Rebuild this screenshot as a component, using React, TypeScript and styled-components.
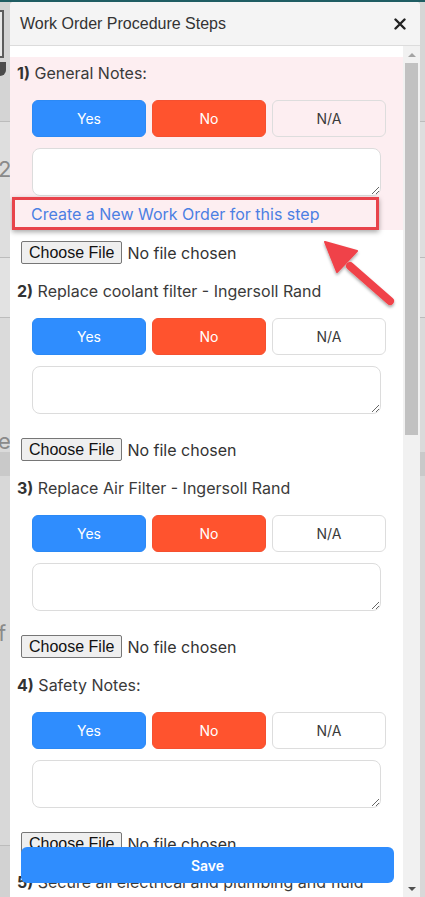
import React from "react";
import styled, { createGlobalStyle } from "styled-components";

const GlobalStyle = createGlobalStyle`
  html, body { margin: 0; padding: 0; }
  body { background: #d3d3d3; overflow: hidden; }
  *, *::before, *::after { box-sizing: border-box; }
`;

const Page = styled.div`
  width: 425px;
  height: 897px;
  display: flex;
  flex-direction: column;
  overflow: hidden;
  background: #d3d3d3;
`;

const TopLine = styled.div`
  height: 2px;
  background: #1f5d63;
  flex: none;
`;

const Main = styled.div`
  flex: 1;
  min-height: 0;
  display: flex;
`;

const SideStrip = styled.div<{ $w: number }>`
  width: ${(p) => p.$w}px;
  flex: none;
  display: flex;
  flex-direction: column;
  overflow: hidden;
  font-family: "Inter", sans-serif;
  font-size: 22px;
  color: #7a7a7a;
`;

const Band = styled.div<{ $h: number; $bg: string; $line?: boolean }>`
  height: ${(p) => p.$h}px;
  flex: none;
  background: ${(p) => p.$bg};
  border-bottom: ${(p) => (p.$line ? "1px solid #bcbcbc" : "none")};
  overflow: hidden;
  line-height: 1;
`;

const EdgeBox = styled.div`
  height: 48px;
  width: 4px;
  margin-top: 8px;
  border: 2px solid #5c5c5c;
  border-left: none;
  background: #e9e9e9;
  flex: none;
`;

const PinIcon = styled.div`
  width: 6px;
  height: 14px;
  margin-top: 4px;
  background: #4a4a4a;
  border-radius: 0 0 6px 0;
  flex: none;
`;

const Glyph = styled.div<{ $top: number }>`
  margin-top: ${(p) => p.$top}px;
  font-size: 22px;
  line-height: 22px;
  color: #8a8a8a;
  margin-left: -2px;
  flex: none;
`;

const Modal = styled.div`
  width: 410px;
  flex: none;
  display: flex;
  flex-direction: column;
  background: #ffffff;
  border-radius: 4px 4px 0 0;
  overflow: hidden;
`;

const Header = styled.div`
  height: 44px;
  flex: none;
  display: flex;
  align-items: center;
  justify-content: space-between;
  padding: 0 14px 0 10px;
  background: #f4f4f4;
  border-bottom: 1px solid #dcdcdc;
`;

const Title = styled.div`
  font-family: "Liberation Sans", Arial, sans-serif;
  font-size: 16px;
  color: #333333;
`;

const CloseButton = styled.button`
  border: none;
  background: none;
  padding: 0;
  width: 12px;
  height: 12px;
  display: flex;
  cursor: pointer;
`;

const Body = styled.div`
  flex: 1;
  min-height: 0;
  display: flex;
  position: relative;
`;

const Content = styled.div`
  flex: 1;
  min-width: 0;
  overflow: hidden;
  padding-top: 11px;
  position: relative;
  font-family: "Inter", sans-serif;
  color: #333333;
`;

const Highlight = styled.div`
  background: #fdeef1;
  padding: 5px 0 5px;
`;

const StepLabel = styled.div<{ $first?: boolean }>`
  margin: ${(p) => (p.$first ? "0" : "16px")} 0 0 7px;
  font-size: 16px;
  line-height: 22px;
  white-space: nowrap;
  color: #3a3a3a;
  b {
    font-weight: 700;
    color: #333;
  }
`;

const ButtonRow = styled.div`
  margin: 16px 0 0 22px;
  width: 354px;
  display: grid;
  grid-template-columns: 1fr 1fr 1fr;
  gap: 6px;
`;

const Choice = styled.button<{ $kind: "yes" | "no" | "na" }>`
  height: 37px;
  border-radius: 6px;
  font-family: "Inter", sans-serif;
  font-size: 14px;
  border: 1px solid
    ${(p) => (p.$kind === "yes" ? "#2b89f5" : p.$kind === "no" ? "#f55030" : "#dddddd")};
  background: ${(p) => (p.$kind === "yes" ? "#2f8dfe" : p.$kind === "no" ? "#ff532e" : "transparent")};
  color: ${(p) => (p.$kind === "na" ? "#3a3a3a" : "#ffffff")};
  cursor: pointer;
`;

const Notes = styled.textarea`
  display: block;
  margin: 11px 0 0 22px;
  width: 349px;
  height: 48px;
  border: 1px solid #dcdcdc;
  border-radius: 8px;
  background: #ffffff;
  font-family: "Inter", sans-serif;
  font-size: 14px;
  outline: none;
`;

const NewOrderLink = styled.a`
  display: block;
  margin: 7px 0 0 21px;
  font-size: 16px;
  line-height: 22px;
  color: #4c7fe3;
  text-decoration: none;
  white-space: nowrap;
`;

const FileRow = styled.div<{ $gap: number }>`
  margin: ${(p) => p.$gap}px 0 0 11px;
  display: flex;
  align-items: center;
  gap: 5px;
  height: 23px;
  font-family: "Inter", sans-serif;
  font-size: 16px;
  color: #333333;
`;

const FileButton = styled.button`
  height: 23px;
  padding: 0 7px;
  border: 1px solid #767676;
  border-radius: 2px;
  background: #efefef;
  font-family: "Liberation Sans", Arial, sans-serif;
  font-size: 16px;
  color: #111111;
`;

const Annotation = styled.div`
  position: absolute;
  left: 2px;
  top: 151px;
  width: 367px;
  height: 33px;
  border: 3px solid #e8434b;
  box-shadow: 0 2px 5px rgba(0, 0, 0, 0.35);
  pointer-events: none;
`;

const ArrowSvg = styled.svg`
  position: absolute;
  left: 300px;
  top: 180px;
  overflow: visible;
  pointer-events: none;
`;

const SaveButton = styled.button`
  position: absolute;
  left: 11px;
  bottom: 14px;
  width: 373px;
  height: 36px;
  border: none;
  border-radius: 6px;
  background: #2f8dfe;
  color: #ffffff;
  font-family: "Inter", sans-serif;
  font-size: 14px;
  font-weight: 600;
  cursor: pointer;
`;

const ScrollTrack = styled.div`
  width: 17px;
  flex: none;
  background: #f1f1f1;
  display: flex;
  flex-direction: column;
  align-items: center;
`;

const ScrollArrow = styled.div<{ $up?: boolean }>`
  height: 17px;
  flex: none;
  display: flex;
  align-items: center;
  justify-content: center;
  &::before {
    content: "";
    width: 0;
    height: 0;
    border-left: 4px solid transparent;
    border-right: 4px solid transparent;
    ${(p) => (p.$up ? "border-bottom: 4px solid #a3a3a3;" : "border-top: 4px solid #505050;")}
  }
`;

const ScrollThumb = styled.div`
  width: 13px;
  height: 372px;
  background: #c1c1c1;
  flex: none;
`;

const ScrollSpacer = styled.div`
  flex: 1;
`;

type Step = { n: number; text: string };

const steps: Step[] = [
  { n: 1, text: "General Notes:" },
  { n: 2, text: "Replace coolant filter - Ingersoll Rand" },
  { n: 3, text: "Replace Air Filter - Ingersoll Rand" },
  { n: 4, text: "Safety Notes:" },
];

const Choices = () => (
  <ButtonRow>
    <Choice $kind="yes">Yes</Choice>
    <Choice $kind="no">No</Choice>
    <Choice $kind="na">N/A</Choice>
  </ButtonRow>
);

const FileInput = ({ gap }: { gap: number }) => (
  <FileRow $gap={gap}>
    <FileButton>Choose File</FileButton>
    <span>No file chosen</span>
  </FileRow>
);

const Label = ({ n, text, first }: { n: number; text: string; first?: boolean }) => (
  <StepLabel $first={first}>
    <b>{n})</b> {text}
  </StepLabel>
);

export default function App() {
  return (
    <>
      <GlobalStyle />
      <Page>
        <TopLine />
        <Main>
          <SideStrip $w={10}>
            <Band $h={120} $bg="#d4d4d4" $line>
              <EdgeBox />
              <PinIcon />
            </Band>
            <Band $h={136} $bg="#dedede" $line>
              <Glyph $top={36}>2</Glyph>
            </Band>
            <Band $h={60} $bg="#e2e2e2" $line />
            <Band $h={134} $bg="#dadada">
              <Glyph $top={112}>e</Glyph>
            </Band>
            <Band $h={24} $bg="#c9c9c9" />
            <Band $h={370} $bg="#d8d8d8" $line>
              <Glyph $top={146}>f</Glyph>
            </Band>
            <Band $h={60} $bg="#d2d2d2" />
          </SideStrip>
          <Modal>
            <Header>
              <Title>Work Order Procedure Steps</Title>
              <CloseButton aria-label="Close">
                <svg width="12" height="12" viewBox="0 0 12 12">
                  <path d="M1.5 1.5 L10.5 10.5 M10.5 1.5 L1.5 10.5" stroke="#222" strokeWidth="2.4" strokeLinecap="round" />
                </svg>
              </CloseButton>
            </Header>
            <Body>
              <Content>
                <Highlight>
                  <Label n={1} text={steps[0].text} first />
                  <Choices />
                  <Notes />
                  <NewOrderLink href="#">Create a New Work Order for this step</NewOrderLink>
                </Highlight>
                <FileInput gap={11} />
                {steps.slice(1).map((s) => (
                  <React.Fragment key={s.n}>
                    <Label n={s.n} text={s.text} />
                    <Choices />
                    <Notes />
                    <FileInput gap={24} />
                  </React.Fragment>
                ))}
                <Label n={5} text="Secure all electrical and plumbing and fluid" />
                <Annotation />
                <ArrowSvg width="100" height="100" viewBox="0 0 100 100">
                  <defs>
                    <filter id="arrowShadow" x="-30%" y="-30%" width="160%" height="160%">
                      <feDropShadow dx="0" dy="2" stdDeviation="1.8" floodColor="#000" floodOpacity="0.35" />
                    </filter>
                  </defs>
                  <g filter="url(#arrowShadow)" fill="#f0434a" stroke="#f0434a">
                    <path d="M40 40 L80 75" strokeWidth="8" strokeLinecap="round" fill="none" />
                    <path d="M15 16 L47 25 L27 46 Z" strokeWidth="2" strokeLinejoin="round" />
                  </g>
                </ArrowSvg>
              </Content>
              <ScrollTrack>
                <ScrollArrow $up />
                <ScrollThumb />
                <ScrollSpacer />
                <ScrollArrow />
              </ScrollTrack>
              <SaveButton>Save</SaveButton>
            </Body>
          </Modal>
          <SideStrip $w={5}>
            <Band $h={120} $bg="#d6d6d6" $line />
            <Band $h={136} $bg="#dedede" $line />
            <Band $h={60} $bg="#e2e2e2" $line />
            <Band $h={134} $bg="#dadada" />
            <Band $h={24} $bg="#c9c9c9" />
            <Band $h={430} $bg="#d8d8d8" />
          </SideStrip>
        </Main>
      </Page>
    </>
  );
}
